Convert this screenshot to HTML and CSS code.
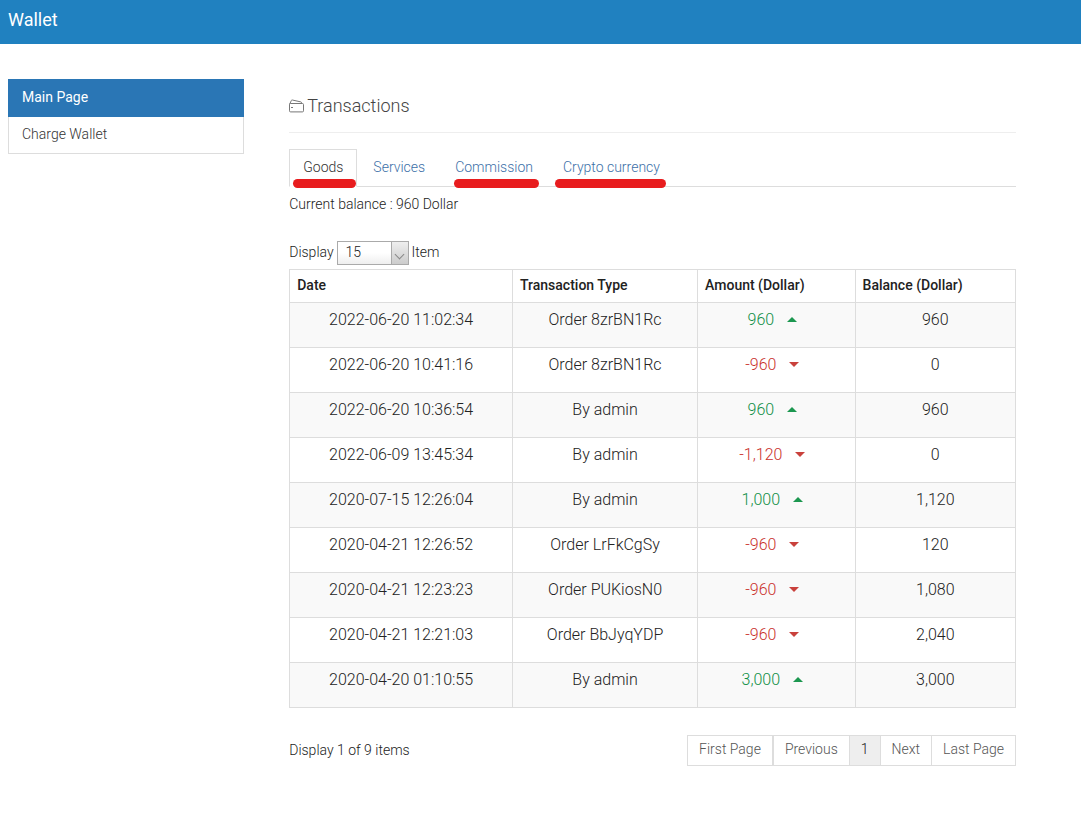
FILE: index.html
```html
<!DOCTYPE html>
<html lang="en">
<head>
<meta charset="utf-8">
<meta name="viewport" content="width=device-width, initial-scale=1">
<title>Wallet</title>
<link rel="stylesheet" href="styles.css">
</head>
<body>
<header class="topbar"><h1 class="topbar-title">Wallet</h1></header>
<div class="layout">
  <nav class="side" aria-label="Wallet">
    <a class="side-link is-active" href="#main">Main Page</a>
    <a class="side-link" href="#charge">Charge Wallet</a>
  </nav>
  <main class="content">
    <h2 class="heading">
      <svg class="heading-icon" viewBox="0 0 15 14" width="15" height="14" fill="none" stroke="#777" aria-hidden="true"><path d="M.5 5.5L2.4 1.4Q2.7.9 3.3 1L11.8 2.9Q12.6 3.1 12.8 4.2"/><path d="M1.5 4.5H13.4Q14.5 4.5 14.5 5.6V11.8Q14.5 12.9 13.4 12.9H1.6Q.5 12.9.5 11.8V5.5Q.5 4.5 1.5 4.5Z"/><path d="M2 8.5H4"/></svg>
      Transactions
    </h2>
    <nav class="tabs" aria-label="Transaction groups">
      <a class="tab is-active marked" href="#goods">Goods</a>
      <a class="tab" href="#services">Services</a>
      <a class="tab marked" href="#commission">Commission</a>
      <a class="tab marked mark-wide" href="#crypto">Crypto currency</a>
    </nav>
    <p class="balance">Current balance : 960 Dollar</p>
    <div class="length">
      <label class="length-text" for="count">Display</label>
      <span class="picker"><select id="count" class="picker-select"><option>15</option></select></span>
      <span class="length-text">Item</span>
    </div>
    <table class="table">
      <colgroup><col class="col-date"><col class="col-type"><col class="col-amount"><col></colgroup>
      <thead>
        <tr><th>Date</th><th>Transaction Type</th><th>Amount (Dollar)</th><th>Balance (Dollar)</th></tr>
      </thead>
      <tbody>
        <tr><td>2022-06-20 11:02:34</td><td>Order 8zrBN1Rc</td><td><span class="amount up">960</span></td><td>960</td></tr>
        <tr><td>2022-06-20 10:41:16</td><td>Order 8zrBN1Rc</td><td><span class="amount down">-960</span></td><td>0</td></tr>
        <tr><td>2022-06-20 10:36:54</td><td>By admin</td><td><span class="amount up">960</span></td><td>960</td></tr>
        <tr><td>2022-06-09 13:45:34</td><td>By admin</td><td><span class="amount down">-1,120</span></td><td>0</td></tr>
        <tr><td>2020-07-15 12:26:04</td><td>By admin</td><td><span class="amount up">1,000</span></td><td>1,120</td></tr>
        <tr><td>2020-04-21 12:26:52</td><td>Order LrFkCgSy</td><td><span class="amount down">-960</span></td><td>120</td></tr>
        <tr><td>2020-04-21 12:23:23</td><td>Order PUKiosN0</td><td><span class="amount down">-960</span></td><td>1,080</td></tr>
        <tr><td>2020-04-21 12:21:03</td><td>Order BbJyqYDP</td><td><span class="amount down">-960</span></td><td>2,040</td></tr>
        <tr><td>2020-04-20 01:10:55</td><td>By admin</td><td><span class="amount up">3,000</span></td><td>3,000</td></tr>
      </tbody>
    </table>
    <div class="footer">
      <p class="summary">Display 1 of 9 items</p>
      <nav class="pager" aria-label="Pages">
        <button class="page page-first" type="button">First Page</button>
        <button class="page" type="button">Previous</button>
        <button class="page is-current" type="button" aria-current="page">1</button>
        <button class="page" type="button">Next</button>
        <button class="page" type="button">Last Page</button>
      </nav>
    </div>
  </main>
</div>
</body>
</html>
```

FILE: styles.css
```css
* { box-sizing: border-box; }
body {
  margin: 0;
  background: #fff;
  color: #222;
  font: 300 14px/20px Roboto, "Liberation Sans", sans-serif;
}
.topbar { background: #2081c0; padding: 10px 8px 14px; }
.topbar-title { margin: 0; color: #fff; font-size: 18px; line-height: 20px; font-weight: 400; }
.layout {
  display: grid;
  grid-template-columns: minmax(0, 13fr) minmax(0, 40fr);
  gap: 45px;
  padding: 35px 65px 40px 8px;
}
.side { align-self: start; border: 1px solid #ddd; border-top: 0; }
.side-link { display: block; padding: 7px 13px 9px; color: #333; text-decoration: none; }
.side-link.is-active {
  margin: 0 -1px;
  padding: 8px 14px 10px;
  background: #2a76b5;
  color: #fff;
  font-weight: 400;
}
.heading {
  display: flex;
  align-items: center;
  gap: 3px;
  margin: 0 0 16px;
  padding: 17px 0 16px;
  border-bottom: 1px solid #eee;
  color: #444;
  font-size: 18px;
  line-height: 20px;
  font-weight: 300;
}
.tabs { display: flex; gap: 2px; border-bottom: 1px solid #ddd; }
.tab {
  position: relative;
  padding: 7px 13px 8px;
  border: 1px solid transparent;
  color: #3c70a8;
  text-decoration: none;
}
.tab.is-active { margin-bottom: -1px; border-color: #ddd #ddd #fff; color: #333; }
.marked::after {
  content: "";
  position: absolute;
  left: 12px;
  right: 7px;
  bottom: -3px;
  height: 9px;
  border-radius: 5px;
  background: #e81c1e;
}
.marked.is-active::after { left: 3px; right: 0; bottom: -2px; }
.mark-wide::after { left: 5px; right: 7px; }
.balance { margin: 7px 0 27px; }
.length { display: flex; align-items: center; gap: 3px; margin-bottom: 4px; }
.length-text { padding-bottom: 2px; }
.picker { position: relative; display: flex; width: 72px; height: 24px; }
.picker-select {
  width: 100%;
  padding: 0 8px 2px;
  border: 1px solid #aaa;
  border-radius: 0;
  appearance: none;
  background: linear-gradient(#fff 50%, #eee);
  color: #222;
  font: inherit;
}
.picker::before {
  content: "";
  position: absolute;
  top: 1px;
  right: 1px;
  bottom: 1px;
  width: 16px;
  border-left: 1px solid #aaa;
  background: linear-gradient(#eee, #ccc);
  pointer-events: none;
}
.picker::after {
  content: "";
  position: absolute;
  right: 6px;
  bottom: 7px;
  width: 6px;
  height: 6px;
  border: solid #888;
  border-width: 0 1px 1px 0;
  transform: rotate(45deg);
  pointer-events: none;
}
.table { width: 100%; border-collapse: collapse; table-layout: fixed; }
.col-date { width: 30.7%; }
.col-type { width: 25.5%; }
.col-amount { width: 21.7%; }
.table th, .table td { border: 1px solid #ddd; }
.table th { padding: 5px 7px 7px; text-align: left; font-weight: 500; }
.table td { padding: 7px 8px 17px; text-align: center; font-size: 16px; }
.table tbody tr:nth-child(odd) { background: #f9f9f9; }
.amount { display: inline-flex; align-items: center; gap: 13px; padding-right: 8px; }
.amount::after { content: ""; margin-bottom: 2px; border: solid transparent; border-width: 0 5px; }
.up { color: #0f8f46; }
.up::after { border-bottom: 5px solid #1c9750; }
.down { color: #c9302c; }
.down::after { border-top: 5px solid #c9413c; }
.footer { display: flex; justify-content: space-between; align-items: flex-start; margin-top: 27px; }
.summary { margin: 0; padding-top: 5px; }
.pager { display: flex; }
.page {
  margin: 0 0 0 -1px;
  padding: 3px 11px 6px;
  border: 1px solid #ddd;
  background: #fff;
  color: #555;
  font: inherit;
  line-height: 20px;
}
.page-first { margin-right: 1px; }
.page.is-current { background: #eee; color: #222; }
```
